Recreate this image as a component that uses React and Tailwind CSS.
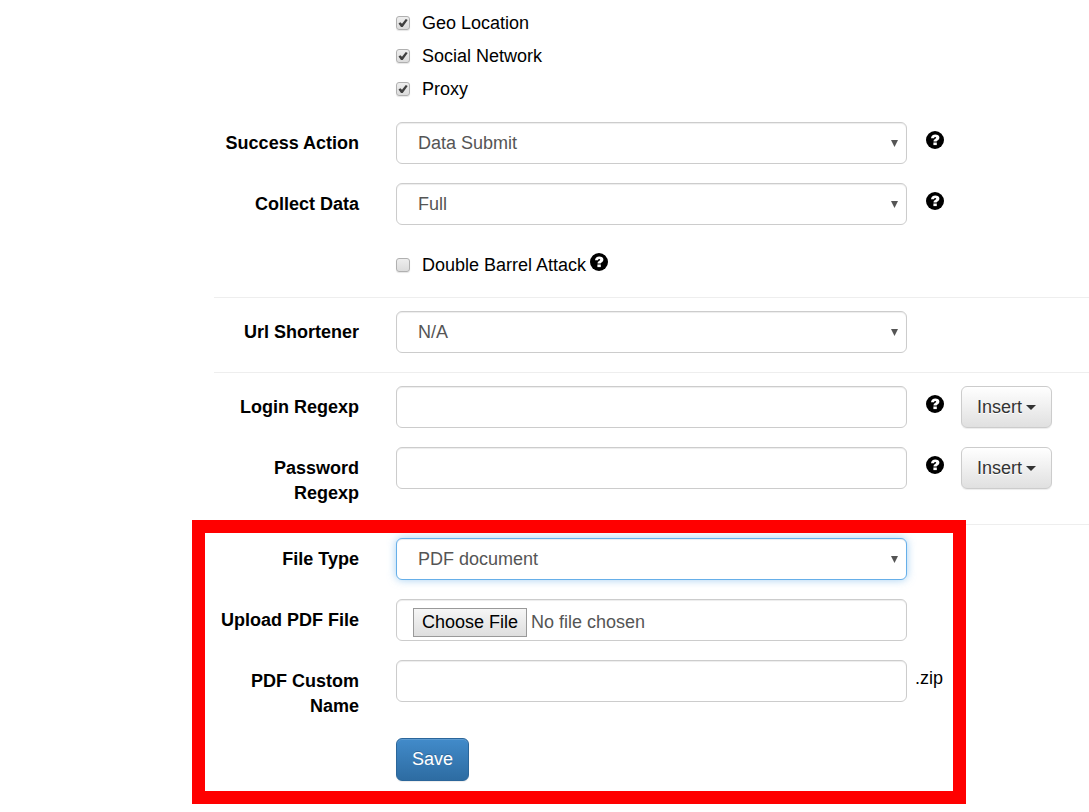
import React, { useState } from 'react';
import clsx from 'clsx';

const fieldClass =
    'block h-[42px] w-full rounded-md border bg-white text-[#555] outline-none';
const idleField = 'border-[#ccc] shadow-[inset_0_1px_1px_rgba(0,0,0,0.075)]';
const activeField =
    'border-[#66afe9] shadow-[inset_0_1px_1px_rgba(0,0,0,0.075),0_0_8px_rgba(102,175,233,0.6)]';

const HelpIcon = () => (
    <svg viewBox="0 0 18 18" className="size-[18px] shrink-0" aria-label="Help" role="img">
        <circle cx="9" cy="9" r="9" fill="#000" />
        <path
            d="M5 7.200C5.100 4.700 6.800 3.400 9.300 3.400c2.400 0 4.100 1.200 4.100 3.200 0 1.500-.8 2.300-1.800 2.900-.7.4-.9.6-.9 1.100H7.500c0-1.500.5-2.100 1.600-2.700.8-.4 1.100-.6 1.100-1.100 0-.5-.4-.8-1-.8-.7 0-1.100.4-1.200 1.200z"
            fill="#fff"
        />
        <rect x="7.400" y="11.500" width="3.400" height="2.600" fill="#fff" />
    </svg>
);

const Row = ({ label, htmlFor, children, after }) => (
    <div className="flex items-start">
        <div className="mr-[37px] w-[145px] shrink-0 pt-[9px] text-right font-bold">
            {label && <label htmlFor={htmlFor}>{label}</label>}
        </div>
        <div className="min-w-0 flex-1">{children}</div>
        <div className="flex w-[182px] shrink-0">{after}</div>
    </div>
);

const Section = ({ className, children }) => (
    <section className={clsx('flex flex-col gap-[19px]', className)}>{children}</section>
);

const Checkbox = ({ label, defaultChecked, children }) => (
    <div className="flex items-start">
        <label className="flex items-center gap-3">
            <span className="relative mb-px flex size-[14px]">
                <input
                    type="checkbox"
                    defaultChecked={defaultChecked}
                    className="peer size-[14px] appearance-none rounded-[3px] border border-[#b0b0b0] bg-linear-to-b from-[#eee] to-[#dcdcdc] shadow-[0_1px_1px_rgba(0,0,0,0.1)]"
                />
                <svg
                    viewBox="0 0 14 14"
                    className="pointer-events-none absolute inset-0 hidden size-[14px] peer-checked:block"
                >
                    <path d="M2.500 7.600 4.300 6.200 6 7.700 9.800 2.900 11.700 4.100 6.700 11H5z" fill="#404040" />
                </svg>
            </span>
            {label}
        </label>
        {children}
    </div>
);

const Select = ({ id, options, active }) => (
    <div className="relative">
        <select
            id={id}
            className={clsx(fieldClass, 'appearance-none px-[21px]', active ? activeField : idleField)}
        >
            {options.map((option) => (
                <option key={option}>{option}</option>
            ))}
        </select>
        <svg
            viewBox="0 0 7 7"
            className="pointer-events-none absolute top-[18px] right-[9px] size-[7px]"
        >
            <path d="M0 0h7L3.500 7z" fill="#555" />
        </svg>
    </div>
);

const Help = () => (
    <span className="ml-[19px] pt-[9px]">
        <HelpIcon />
    </span>
);

const InsertButton = () => (
    <button
        type="button"
        className="ml-[17px] flex h-[42px] items-center gap-1 rounded-md border border-[#ccc] bg-linear-to-b from-white to-[#e0e0e0] px-[15px] text-[#333] shadow-[inset_0_1px_0_rgba(255,255,255,0.15),0_1px_1px_rgba(0,0,0,0.075)] text-shadow-[0_1px_0_#fff]"
    >
        Insert
        <svg viewBox="0 0 10 5" className="h-[5px] w-[10px]">
            <path d="M0 0h10L5 5z" fill="#333" />
        </svg>
    </button>
);

const App = () => {
    const [regexps, setRegexps] = useState({ login: '', password: '' });
    const [customName, setCustomName] = useState('');

    const updateRegexp = (key) => (e) => setRegexps({ ...regexps, [key]: e.target.value });

    return (
        <form
            className="min-h-screen bg-white pl-[214px] font-['Liberation_Sans',Arial,sans-serif] text-[18px] leading-[25px] text-black"
            onSubmit={(e) => e.preventDefault()}
        >
            <Section className="pt-[11px] pb-[19px]">
                <Row>
                    <div className="flex flex-col gap-2 pb-px">
                        <Checkbox label="Geo Location" defaultChecked />
                        <Checkbox label="Social Network" defaultChecked />
                        <Checkbox label="Proxy" defaultChecked />
                    </div>
                </Row>
                <Row label="Success Action" htmlFor="success-action" after={<Help />}>
                    <Select id="success-action" options={['Data Submit', 'Click']} />
                </Row>
                <Row label="Collect Data" htmlFor="collect-data" after={<Help />}>
                    <Select id="collect-data" options={['Full', 'Partial']} />
                </Row>
                <Row>
                    <div className="flex items-center pt-[9px]">
                        <Checkbox label="Double Barrel Attack">
                            <span className="ml-1">
                                <HelpIcon />
                            </span>
                        </Checkbox>
                    </div>
                </Row>
            </Section>

            <Section className="border-t border-[#eee] pt-[13px] pb-[19px]">
                <Row label="Url Shortener" htmlFor="url-shortener">
                    <Select id="url-shortener" options={['N/A']} />
                </Row>
            </Section>

            <Section className="border-t border-[#eee] pt-[13px] pb-[18px]">
                <Row label="Login Regexp" htmlFor="login-regexp" after={<><Help /><InsertButton /></>}>
                    <input
                        id="login-regexp"
                        type="text"
                        value={regexps.login}
                        onChange={updateRegexp('login')}
                        className={clsx(fieldClass, idleField, 'px-4')}
                    />
                </Row>
                <Row label="Password Regexp" htmlFor="password-regexp" after={<><Help /><InsertButton /></>}>
                    <input
                        id="password-regexp"
                        type="text"
                        value={regexps.password}
                        onChange={updateRegexp('password')}
                        className={clsx(fieldClass, idleField, 'px-4')}
                    />
                </Row>
            </Section>

            <Section className="relative border-t border-[#eee] pt-[13px] pb-[18px]">
                <Row label="File Type" htmlFor="file-type">
                    <Select id="file-type" options={['PDF document', 'Word document']} active />
                </Row>
                <Row label="Upload PDF File" htmlFor="pdf-file">
                    <input
                        id="pdf-file"
                        type="file"
                        className={clsx(
                            fieldClass,
                            idleField,
                            'px-4 pt-2 file:h-[29px] file:border file:border-solid file:border-[#999] file:bg-linear-to-b file:from-[#f6f6f6] file:to-[#dedede] file:px-2 file:text-black'
                        )}
                    />
                </Row>
                <Row
                    label="PDF Custom Name"
                    htmlFor="custom-name"
                    after={<span className="ml-2 pt-[6px]">.zip</span>}
                >
                    <input
                        id="custom-name"
                        type="text"
                        value={customName}
                        onChange={(e) => setCustomName(e.target.value)}
                        className={clsx(fieldClass, idleField, 'px-4')}
                    />
                </Row>
                <Row>
                    <button
                        type="submit"
                        className="h-[43px] rounded-md border border-[#2b669a] bg-linear-to-b from-[#428bca] to-[#2d6ca2] px-[15px] text-white shadow-[inset_0_1px_0_rgba(255,255,255,0.15),0_1px_1px_rgba(0,0,0,0.075)] text-shadow-[0_-1px_0_rgba(0,0,0,0.2)]"
                    >
                        Save
                    </button>
                </Row>
                {/* highlight frame round the file settings */}
                <div className="pointer-events-none absolute -top-[5px] right-[123px] -bottom-[5px] -left-[22px] border-[13px] border-[#f00]" />
            </Section>
        </form>
    );
};

export default App;
